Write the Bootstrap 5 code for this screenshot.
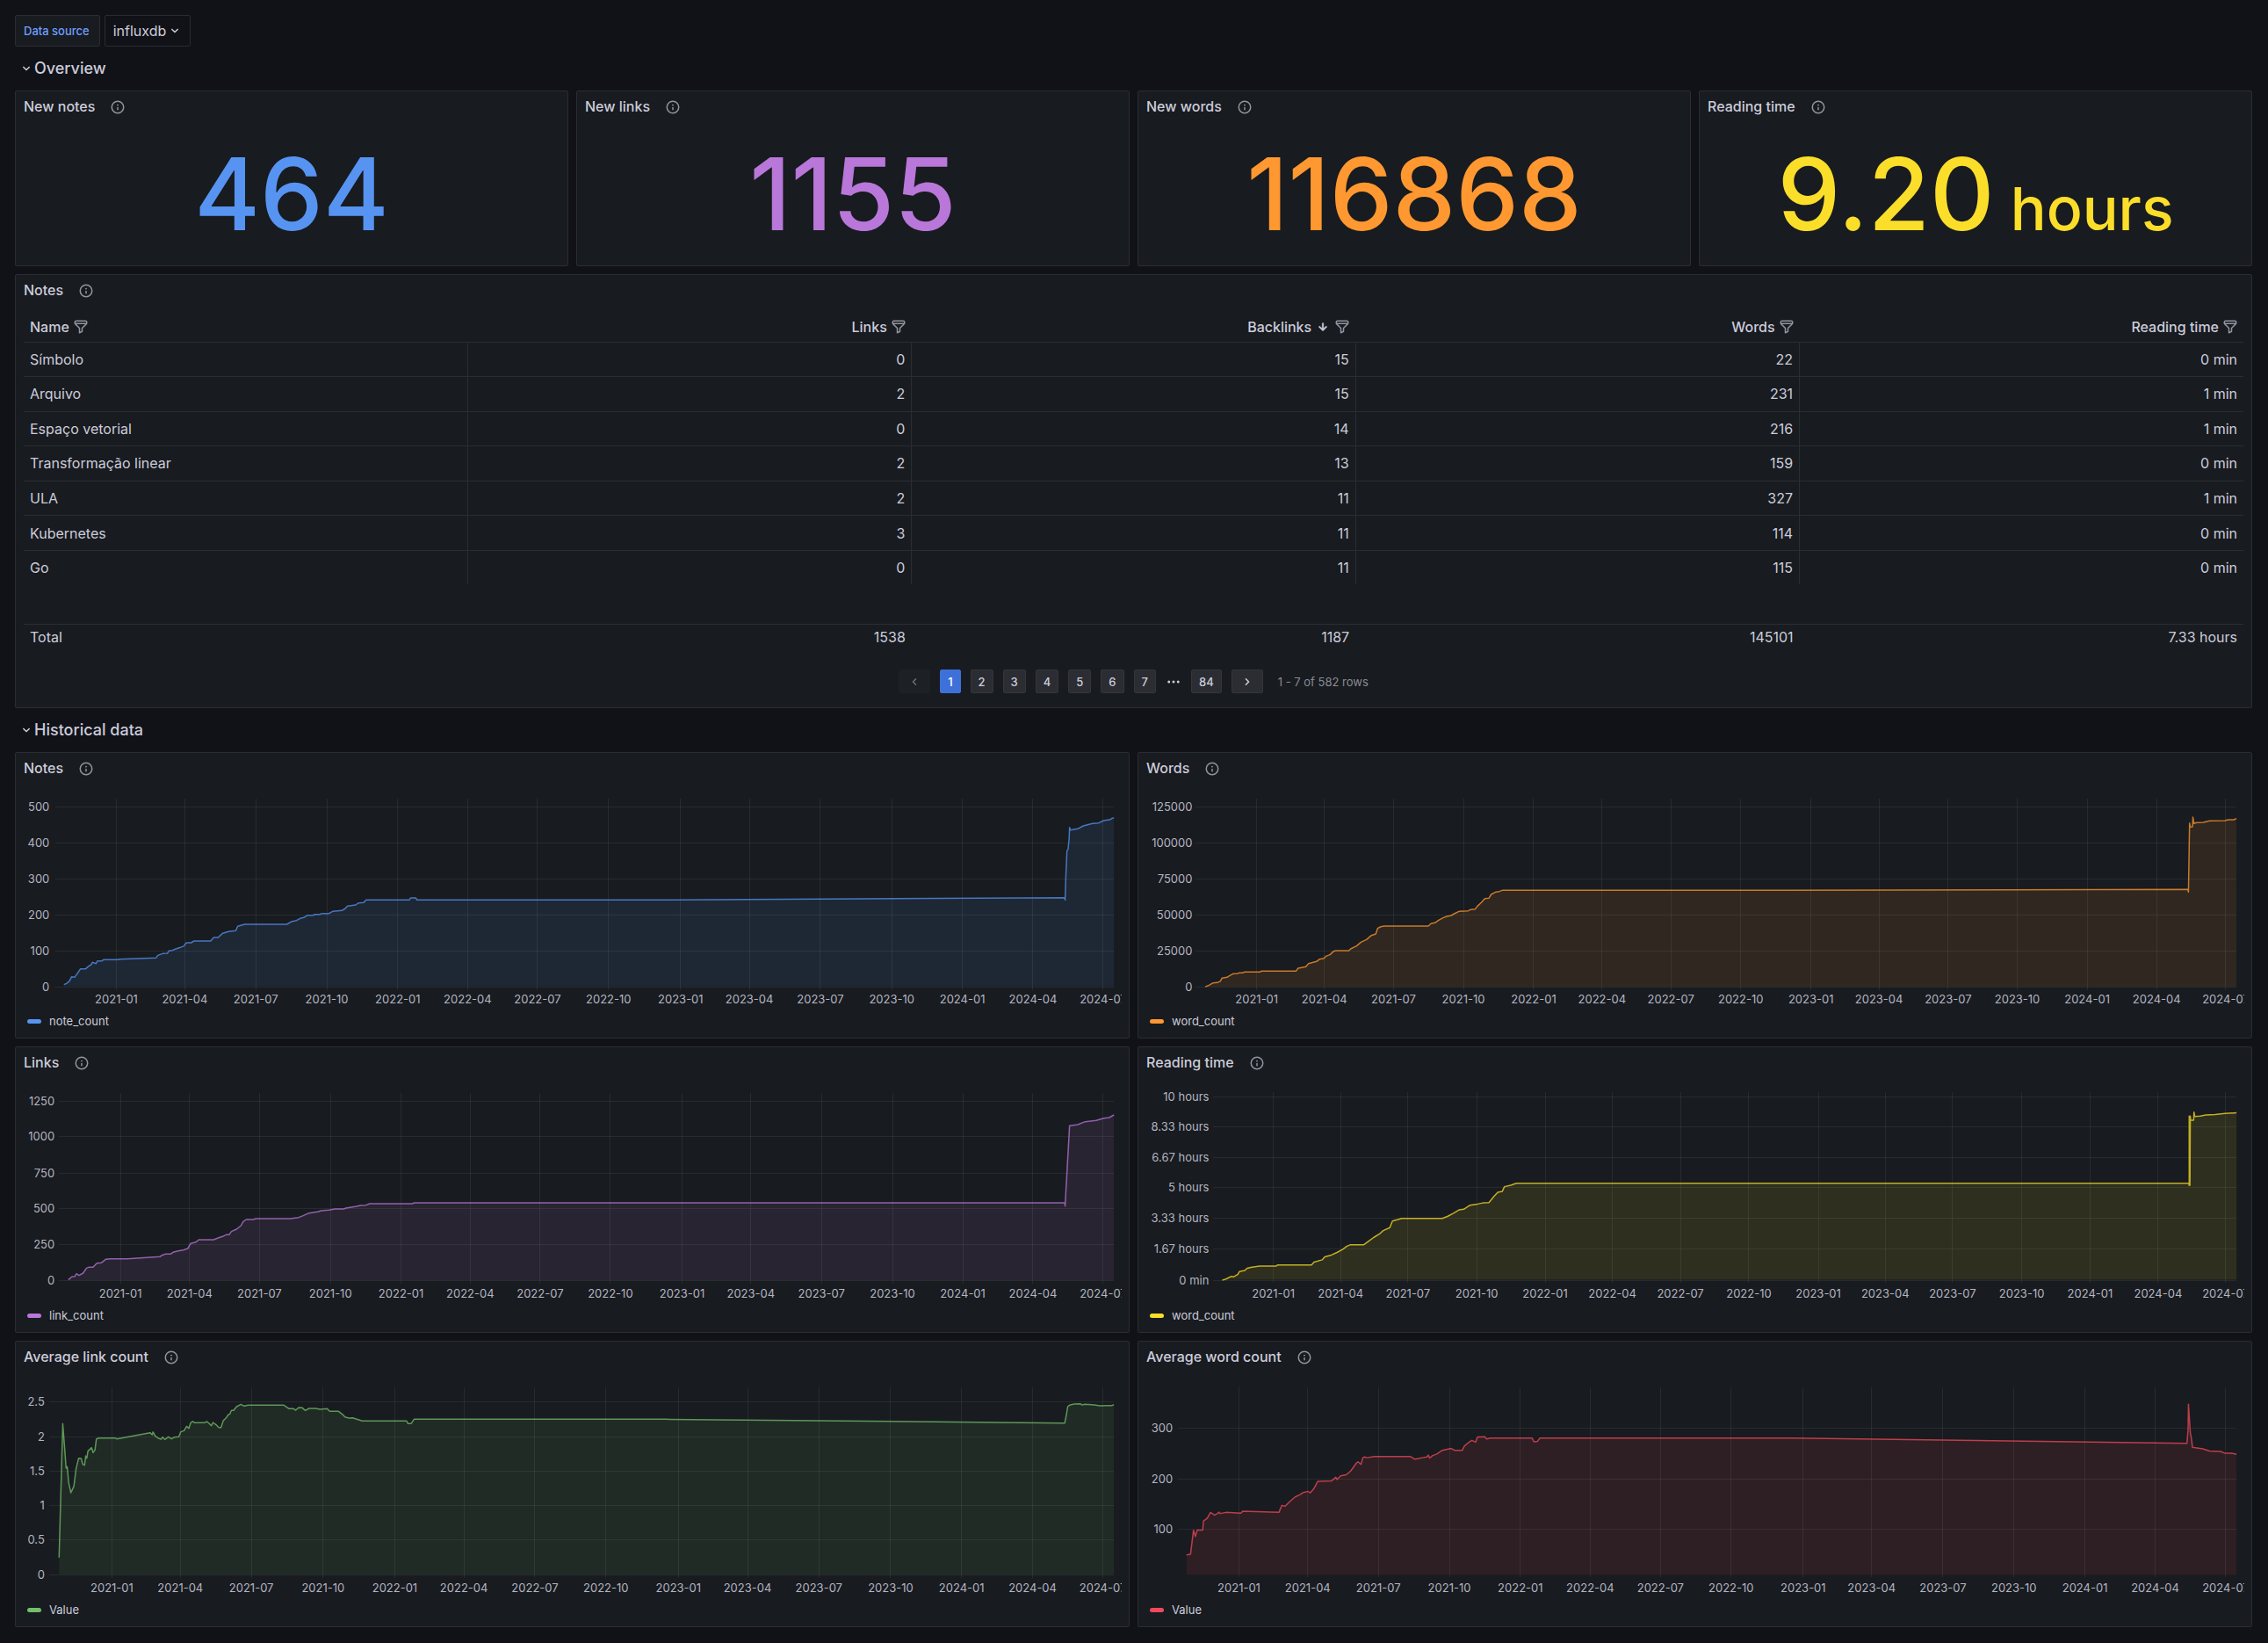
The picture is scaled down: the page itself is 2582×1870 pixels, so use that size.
<!DOCTYPE html>
<html lang="en" data-bs-theme="dark">
<head>
<meta charset="utf-8">
<meta name="viewport" content="width=device-width, initial-scale=1">
<title>Notes dashboard</title>
<link href="https://cdn.jsdelivr.net/npm/bootstrap@5.3.0/dist/css/bootstrap.min.css" rel="stylesheet">
<style>
  :root { --ink: #ccccdc; --muted: #93949f; --line: #2a2d32; --panel: #181b1f; }
  body { background: #111217; color: var(--ink); font-family: Inter, "Liberation Sans", sans-serif; font-size: 16px; line-height: 24px; }
  .dash { padding: 17px 18px 19px 17px; }
  .ico { width: 18px; height: 18px; fill: currentColor; flex: none; }
  .var-label, .var-box { height: 36px; border: 1px solid #2a2c32; border-radius: 2px; }
  .var-label { background: var(--panel); color: #6e9fff; font-size: 13px; font-weight: 500; padding: 0 11px 0 9px; }
  .var-box { padding: 0 8px 0 9px; margin-left: 5px; }
  .var-box select { appearance: none; background: transparent; color: var(--ink); border: 0; padding: 0 18px 0 0; }
  .var-box .ico { margin-left: -18px; pointer-events: none; }
  .row-head { height: 50px; padding: 0 4px; color: var(--ink); font-size: 18px; font-weight: 500; background: none; border: 0; }
  .tiles { --bs-gutter-x: 9px; --bs-gutter-y: 9px; }
  .tile { background: var(--panel); border: 1px solid var(--line); border-radius: 2px; }
  .tile-head { height: 35px; padding: 0 9px; gap: 17px; color: var(--ink); font-size: 16px; font-weight: 500; margin: 0; }
  .tile-head .ico, th .filter { color: var(--muted); }
  .stat-tile { height: 200px; }
  .stat-value { font-size: 114px; line-height: 138px; font-weight: 500; }
  .stat-value small { font-size: 68px; line-height: 68px; }
  .notes-tile { height: 494px; }
  .notes-table { --bs-table-bg: transparent; --bs-table-color: var(--ink); table-layout: fixed; width: calc(100% - 18px); height: 384px; margin: 7px 9px 0; line-height: 20px; }
  .notes-table > :not(caption) > tr > * { padding: 0 7px; border: 0 solid var(--line); color: var(--ink); box-shadow: none; text-align: right; vertical-align: middle; }
  .notes-table > :not(caption) > tr > :first-child { text-align: left; }
  .notes-table > thead > tr > th { height: 34px; border-bottom-width: 1px; font-weight: 500; padding-right: 6px; }
  .notes-table > tbody > tr > td { border-bottom-width: 1px; border-right-width: 1px; }
  .notes-table > tbody > tr > td:last-child { border-right-width: 0; }
  .notes-table > tbody > tr:last-child > td { border-bottom-width: 0; }
  .notes-table > tfoot > .spacer > td { height: 45px; }
  .notes-table > tfoot > tr > td { height: 29px; }
  .notes-table > tfoot > .totals > td { border-top-width: 1px; }
  .pages { gap: 11px; margin-top: 23px; }
  .page-btn { height: 27px; padding: 0 8px; border: 1px solid #34363c; border-radius: 2px; background: #2b2d33; color: var(--ink); font-size: 13px; font-weight: 500; }
  .page-btn.on { background: #3d71d9; border-color: #3d71d9; color: #fff; }
  .page-btn:disabled { background: #1d2024; border-color: #1d2024; color: #6c6e77; }
  .page-info { font-size: 13px; color: #8a8b96; margin-left: 6px; }
  .chart-tile { height: 326px; }
  .plot { display: block; width: 100%; height: 241px; margin-top: 13px; overflow: hidden; }
  .plot-wrap { padding: 0 8px; }
  .plot text { fill: #b4b5c3; font-size: 13px; }
  .plot line { stroke: #f0faff; stroke-opacity: .07; shape-rendering: crispEdges; }
  .trace { fill: none; stroke-width: 1.5; stroke-opacity: .75; vector-effect: non-scaling-stroke; stroke-linejoin: round; }
  .legend-row { padding: 6px 13px 0; gap: 9px; font-size: 13px; line-height: 20px; }
  .swatch { width: 16px; height: 5px; border-radius: 3px; }
</style>
</head>
<body>
<svg class="d-none" aria-hidden="true">
  <symbol id="info" viewBox="0 0 24 24"><path d="M12,2A10,10,0,1,0,22,12,10.01,10.01,0,0,0,12,2Zm0,18a8,8,0,1,1,8-8A8,8,0,0,1,12,20Zm0-8.5a1,1,0,0,0-1,1v3a1,1,0,0,0,2,0v-3A1,1,0,0,0,12,11.5Zm0-4a1.25,1.25,0,1,0,1.25,1.25A1.25,1.25,0,0,0,12,7.5Z"/></symbol>
  <symbol id="filter" viewBox="0 0 24 24"><path d="M19,2H5A3,3,0,0,0,2,5V6.17a3,3,0,0,0,.25,1.2l0,.06a2.81,2.81,0,0,0,.59.86L9,14.41V21a1,1,0,0,0,.47.85A1,1,0,0,0,10,22a1,1,0,0,0,.45-.11l4-2A1,1,0,0,0,15,19V14.41l6.12-6.12a2.81,2.81,0,0,0,.59-.86l0-.06A3,3,0,0,0,22,6.17V5A3,3,0,0,0,19,2ZM13.29,13.29A1,1,0,0,0,13,14v4.38l-2,1V14a1,1,0,0,0-.29-.71L5.41,8H18.59ZM20,6H4V5A1,1,0,0,1,5,4H19a1,1,0,0,1,1,1Z"/></symbol>
  <symbol id="down" viewBox="0 0 24 24"><path d="M17,9.17a1,1,0,0,0-1.41,0L12,12.71,8.46,9.17a1,1,0,0,0-1.41,0,1,1,0,0,0,0,1.42l4.24,4.24a1,1,0,0,0,1.42,0L17,10.59A1,1,0,0,0,17,9.17Z"/></symbol>
  <symbol id="left" viewBox="0 0 24 24"><path d="M11.29,12l3.54-3.54a1,1,0,0,0,0-1.41,1,1,0,0,0-1.42,0L9.17,11.29a1,1,0,0,0,0,1.42L13.41,17a1,1,0,0,0,.71.29,1,1,0,0,0,.71-.29,1,1,0,0,0,0-1.41Z"/></symbol>
  <symbol id="right" viewBox="0 0 24 24"><path d="M14.83,11.29,10.59,7.05a1,1,0,0,0-1.42,0,1,1,0,0,0,0,1.41L12.71,12,9.17,15.54a1,1,0,0,0,0,1.41,1,1,0,0,0,.71.29,1,1,0,0,0,.71-.29l4.24-4.24A1,1,0,0,0,14.83,11.29Z"/></symbol>
  <symbol id="sort" viewBox="0 0 24 24"><path stroke="currentColor" stroke-width=".7" d="M17.71,11.29a1,1,0,0,0-1.42,0L13,14.59V7a1,1,0,0,0-2,0v7.59l-3.29-3.3a1,1,0,0,0-1.42,1.42l5,5a1,1,0,0,0,.33.21.94.94,0,0,0,.76,0,1,1,0,0,0,.33-.21l5-5A1,1,0,0,0,17.71,11.29Z"/></symbol>
  <symbol id="dots" viewBox="0 0 24 24"><circle cx="5" cy="12" r="2"/><circle cx="12" cy="12" r="2"/><circle cx="19" cy="12" r="2"/></symbol>
</svg>

<main class="dash container-fluid">
  <div class="d-flex">
    <label class="var-label d-flex align-items-center" for="source">Data source</label>
    <div class="var-box d-flex align-items-center">
      <select id="source"><option>influxdb</option></select>
      <svg class="ico"><use href="#down"/></svg>
    </div>
  </div>

  <button class="row-head d-flex align-items-center" type="button" aria-expanded="true"><svg class="ico"><use href="#down"/></svg>Overview</button>

  <div class="row tiles">
    <section class="col-3"><div class="tile stat-tile d-flex flex-column">
      <h2 class="tile-head d-flex align-items-center">New notes<svg class="ico"><use href="#info"/></svg></h2>
      <div class="stat-value flex-grow-1 d-flex align-items-center justify-content-center" style="color:#5794f2">464</div>
    </div></section>
    <section class="col-3"><div class="tile stat-tile d-flex flex-column">
      <h2 class="tile-head d-flex align-items-center">New links<svg class="ico"><use href="#info"/></svg></h2>
      <div class="stat-value flex-grow-1 d-flex align-items-center justify-content-center" style="color:#b877d9">1155</div>
    </div></section>
    <section class="col-3"><div class="tile stat-tile d-flex flex-column">
      <h2 class="tile-head d-flex align-items-center">New words<svg class="ico"><use href="#info"/></svg></h2>
      <div class="stat-value flex-grow-1 d-flex align-items-center justify-content-center" style="color:#ff9830">116868</div>
    </div></section>
    <section class="col-3"><div class="tile stat-tile d-flex flex-column">
      <h2 class="tile-head d-flex align-items-center">Reading time<svg class="ico"><use href="#info"/></svg></h2>
      <div class="stat-value flex-grow-1 d-flex align-items-center justify-content-center" style="color:#fade2a"><div>9.20<small class="fw-medium"> hours</small></div></div>
    </div></section>

    <section class="col-12"><div class="tile notes-tile d-flex flex-column">
      <h2 class="tile-head d-flex align-items-center">Notes<svg class="ico"><use href="#info"/></svg></h2>
      <table class="table notes-table">
        <thead><tr>
          <th><span class="d-inline-flex align-items-center gap-1">Name<svg class="ico filter"><use href="#filter"/></svg></span></th>
          <th><span class="d-inline-flex align-items-center gap-1">Links<svg class="ico filter"><use href="#filter"/></svg></span></th>
          <th><span class="d-inline-flex align-items-center gap-1">Backlinks<svg class="ico"><use href="#sort"/></svg><svg class="ico filter"><use href="#filter"/></svg></span></th>
          <th><span class="d-inline-flex align-items-center gap-1">Words<svg class="ico filter"><use href="#filter"/></svg></span></th>
          <th><span class="d-inline-flex align-items-center gap-1">Reading time<svg class="ico filter"><use href="#filter"/></svg></span></th>
        </tr></thead>
        <tbody>
          <tr><td>Símbolo</td><td>0</td><td>15</td><td>22</td><td>0 min</td></tr>
          <tr><td>Arquivo</td><td>2</td><td>15</td><td>231</td><td>1 min</td></tr>
          <tr><td>Espaço vetorial</td><td>0</td><td>14</td><td>216</td><td>1 min</td></tr>
          <tr><td>Transformação linear</td><td>2</td><td>13</td><td>159</td><td>0 min</td></tr>
          <tr><td>ULA</td><td>2</td><td>11</td><td>327</td><td>1 min</td></tr>
          <tr><td>Kubernetes</td><td>3</td><td>11</td><td>114</td><td>0 min</td></tr>
          <tr><td>Go</td><td>0</td><td>11</td><td>115</td><td>0 min</td></tr>
        </tbody>
        <tfoot>
          <tr class="spacer"><td colspan="5"></td></tr>
          <tr class="totals"><td>Total</td><td>1538</td><td>1187</td><td>145101</td><td>7.33 hours</td></tr>
        </tfoot>
      </table>
      <nav class="pages d-flex justify-content-center align-items-center" aria-label="Table pages">
        <button class="page-btn d-flex align-items-center" type="button" disabled aria-label="Previous page"><svg class="ico"><use href="#left"/></svg></button>
        <button class="page-btn on" type="button">1</button>
        <button class="page-btn" type="button">2</button>
        <button class="page-btn" type="button">3</button>
        <button class="page-btn" type="button">4</button>
        <button class="page-btn" type="button">5</button>
        <button class="page-btn" type="button">6</button>
        <button class="page-btn" type="button">7</button>
        <svg class="ico"><use href="#dots"/></svg>
        <button class="page-btn" type="button">84</button>
        <button class="page-btn d-flex align-items-center" type="button" aria-label="Next page"><svg class="ico"><use href="#right"/></svg></button>
        <span class="page-info">1 - 7 of 582 rows</span>
      </nav>
    </div></section>
  </div>

  <button class="row-head d-flex align-items-center" type="button" aria-expanded="true"><svg class="ico"><use href="#down"/></svg>Historical data</button>

  <div class="row tiles" id="charts"></div>
</main>

<script src="https://cdn.jsdelivr.net/npm/bootstrap@5.3.0/dist/js/bootstrap.bundle.min.js"></script>
<script>
// Each chart keeps its own drawing units: view = left, top, width, height of the plot box.
// Horizontal places become percentages, so a chart follows the width of its panel.
const quarters = ['2021-01','2021-04','2021-07','2021-10','2022-01','2022-04','2022-07','2022-10','2023-01','2023-04','2023-07','2023-10','2024-01','2024-04','2024-07'];
const charts = [
  { title: 'Notes', series: 'note_count', color: '#5794f2', view: [62, 285, 2972, 723],
    labelX: 134, gridX: 150, endX: 3013, top: 297, bottom: 950, base: 938,
    y: [['500',325],['400',447],['300',570],['200',692],['100',815],['0',938]],
    x: [315,500,692,884,1076,1265,1454,1646,1841,2027,2219,2412,2603,2794,2984],
    pts: '173,932 180,928 188,920 194,905 202,907 210,893 218,878 232,878 240,869 247,864 250,856 260,860 264,851 276,851 280,847 320,847 322,845 422,841 427,832 440,826 453,825 457,817 466,815 476,810 488,805 498,800 504,789 517,789 525,783 570,783 578,771 590,771 602,757 618,751 638,748 643,733 662,726 776,726 790,716 802,713 812,706 822,703 832,695 848,695 850,692 866,692 870,689 890,689 900,682 925,679 934,672 940,664 962,660 970,653 984,652 990,643 1107,643 1111,636 1125,636 1128,643 1800,643 2879,635 2881,643 2883,560 2886,475 2889,470 2892,430 2893,395 2895,404 2915,400 2930,390 2955,382 2972,380 2985,372 3003,368 3008,364 3013,363' },
  { title: 'Words', series: 'word_count', color: '#ff9830', view: [57, 195, 2972, 723],
    labelX: 184, gridX: 193, endX: 3008, top: 207, bottom: 860, base: 849,
    y: [['125000',235],['100000',356],['75000',480],['50000',602],['25000',725],['0',849]],
    x: [358,541,728,917,1107,1292,1478,1667,1857,2041,2228,2415,2604,2792,2979],
    pts: '219,849 228,845 240,836 252,835 260,830 264,820 278,817 284,812 294,805 306,804 310,802 320,802 324,799 367,799 370,796 464,796 470,786 491,781 498,770 520,763 528,755 540,752 545,745 556,740 566,728 572,726 607,726 612,720 628,710 640,697 655,688 668,674 680,669 685,650 692,645 702,642 822,642 830,633 840,631 850,622 862,614 872,609 884,606 892,600 905,592 930,590 936,586 949,584 955,574 966,561 975,548 986,547 992,534 1004,526 1014,524 1022,520 1800,520 2876,517 2878,526 2881,290 2883,304 2889,303 2890,270 2893,292 2900,289 2918,288 2935,283 2977,282 2985,279 3000,279 3008,275' },
  { title: 'Links', series: 'link_count', color: '#b877d9', view: [62, 180, 2972, 723],
    labelX: 148, gridX: 160, endX: 3013, top: 192, bottom: 842, base: 831,
    y: [['1250',220],['1000',340],['750',464],['500',585],['250',708],['0',831]],
    x: [326,513,702,894,1085,1272,1461,1651,1845,2031,2222,2414,2604,2794,2984],
    pts: '185,830 195,819 203,818 207,809 214,815 225,807 234,790 240,787 252,787 262,773 274,772 286,760 298,758 345,758 433,751 438,746 448,742 462,742 468,736 482,731 496,728 508,723 516,706 530,701 538,693 578,693 590,687 602,682 612,676 620,676 626,665 640,657 652,645 658,631 666,624 686,624 692,621 785,621 808,617 820,611 836,602 862,597 868,594 890,592 906,588 930,588 936,585 950,582 965,579 975,576 990,575 1000,570 1116,570 1120,567 2880,567 2881,578 2883,530 2887,440 2893,304 2915,300 2935,290 2965,286 2985,278 3000,276 3013,267' },
  { title: 'Reading time', series: 'word_count', color: '#fade2a', view: [57, 119, 2972, 573],
    labelX: 229, gridX: 241, endX: 3008, top: 127, bottom: 642, base: 634,
    y: [['10 hours',138],['8.33 hours',219],['6.67 hours',303],['5 hours',384],['3.33 hours',467],['1.67 hours',550],['0 min',634]],
    x: [403,585,767,953,1138,1320,1504,1689,1877,2058,2240,2427,2612,2796,2979],
    pts: '265,635 275,632 288,625 296,626 307,619 311,612 326,609 332,603 345,600 366,597 410,597 414,594 506,594 513,586 535,580 542,572 560,567 575,560 590,552 602,543 612,539 648,539 660,530 675,519 690,510 700,501 718,493 725,475 740,471 750,468 860,468 875,462 890,454 905,445 918,443 935,432 955,429 970,426 986,425 1000,408 1010,397 1022,395 1028,382 1045,378 1060,373 2879,373 2880,379 2880,191 2882,378 2883,191 2884,202 2892,202 2893,180 2895,192 2910,191 2925,188 2950,187 2977,184 3008,182' },
  { title: 'Average link count', series: 'Value', color: '#73bf69', view: [62, 162, 2972, 723],
    labelX: 121, gridX: 133, endX: 3013, top: 174, bottom: 824, base: 812,
    y: [['2.5',223],['2',341],['1.5',458],['1',577],['0.5',694],['0',812]],
    x: [303,488,680,874,1068,1255,1447,1639,1835,2022,2215,2409,2601,2793,2983],
    pts: '160,755 170,298 175,380 179,450 182,445 186,500 192,534 200,512 206,452 213,416 220,417 224,437 229,440 232,408 235,416 238,392 248,380 252,397 257,388 261,350 268,347 312,347 316,350 406,329 412,336 414,326 420,340 430,349 436,351 440,344 446,352 456,343 464,350 472,344 484,343 489,326 498,322 505,307 511,314 516,295 522,290 526,295 552,295 560,291 568,300 572,305 576,294 584,301 592,311 598,311 604,288 612,278 618,267 622,265 626,253 632,253 640,240 652,232 660,238 672,235 768,235 782,247 794,247 800,252 808,243 818,244 826,253 836,246 854,246 866,249 885,247 892,256 916,256 928,268 933,275 944,279 954,278 980,289 1100,289 1104,298 1112,298 1120,283 1800,283 2880,296 2884,270 2888,240 2893,235 2905,231 2922,230 2926,234 2935,232 2960,234 2975,237 2995,236 3008,236 3013,233' },
  { title: 'Average word count', series: 'Value', color: '#f2495c', view: [57, 912, 2972, 573],
    labelX: 131, gridX: 145, endX: 3008, top: 922, bottom: 1435, base: 1429,
    y: [['300',1032],['200',1168],['100',1305]],
    x: [310,496,687,879,1071,1260,1450,1641,1836,2021,2214,2406,2598,2788,2979],
    pts: '168,1375 179,1373 187,1308 192,1325 197,1308 212,1308 214,1283 224,1276 233,1260 244,1267 252,1263 256,1259 259,1263 275,1260 315,1262 320,1257 418,1260 426,1241 435,1243 448,1230 462,1218 475,1212 482,1207 496,1203 503,1207 513,1195 523,1176 560,1175 572,1165 575,1171 585,1161 600,1158 612,1148 628,1126 632,1123 640,1130 645,1112 650,1110 656,1112 676,1109 774,1109 786,1116 806,1112 818,1110 822,1105 826,1113 834,1106 845,1102 860,1092 884,1087 893,1092 914,1092 920,1080 932,1070 940,1065 950,1070 955,1056 975,1055 980,1061 990,1059 1103,1059 1108,1069 1117,1068 1124,1059 1805,1059 2874,1073 2877,1035 2878,967 2883,1044 2886,1060 2889,1084 2917,1088 2935,1094 2965,1095 2977,1100 2995,1100 3008,1103' }
];
const plotHeight = 241;
document.getElementById('charts').innerHTML = charts.map(c => {
  const [vx, vy, vw, vh] = c.view;
  const px = x => ((x - vx) / vw * 100).toFixed(3) + '%';
  const py = y => Math.round((y - vy) / vh * plotHeight);
  const rows = c.y.map(([t, y]) =>
    `<line x1="${px(c.gridX)}" x2="${px(c.endX)}" y1="${py(y)}" y2="${py(y)}"/><text x="${px(c.labelX)}" y="${py(y)}" dy="5" text-anchor="end">${t}</text>`).join('');
  const cols = c.x.map((x, i) =>
    `<line x1="${px(x)}" x2="${px(x)}" y1="${py(c.top)}" y2="${py(c.bottom)}"/><text x="${px(x)}" y="237" text-anchor="middle">${quarters[i]}</text>`).join('');
  const first = c.pts.split(',')[0];
  return `<section class="col-6"><div class="tile chart-tile">
    <h2 class="tile-head d-flex align-items-center">${c.title}<svg class="ico"><use href="#info"/></svg></h2>
    <div class="plot-wrap"><svg class="plot" role="img" aria-label="${c.title}">${rows}${cols}
      <svg width="100%" height="${plotHeight}" viewBox="${c.view.join(' ')}" preserveAspectRatio="none">
        <polygon points="${first},${c.base} ${c.pts} ${c.endX},${c.base}" fill="${c.color}" fill-opacity=".1"/>
        <polyline class="trace" points="${c.pts}" stroke="${c.color}"/>
      </svg></svg></div>
    <div class="legend-row d-flex align-items-center"><span class="swatch" style="background:${c.color}"></span>${c.series}</div>
  </div></section>`;
}).join('');
</script>
</body>
</html>
